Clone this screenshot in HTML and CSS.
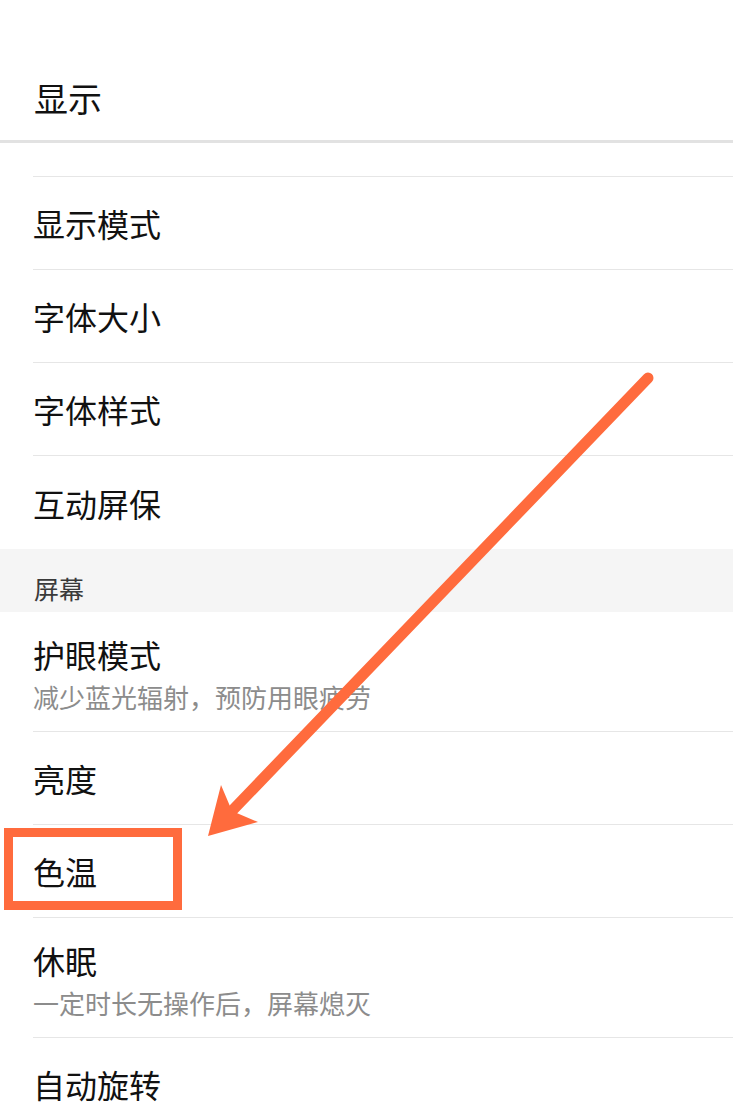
FILE: index.html
```html
<!DOCTYPE html>
<html lang="zh-CN">
<head>
<meta charset="utf-8">
<title>显示</title>
<link rel="stylesheet" href="styles.css">
</head>
<body>
<div class="page">
  <header class="header">
    <h1 class="header-title">显示</h1>
  </header>
  <div class="list">
    <div class="row row-partial"><span class="title">壁纸</span></div>
    <div class="row"><span class="title">显示模式</span></div>
    <div class="row"><span class="title">字体大小</span></div>
    <div class="row"><span class="title">字体样式</span></div>
    <div class="row row-last"><span class="title">互动屏保</span></div>
    <div class="section">屏幕</div>
    <div class="row row-tall">
      <span class="title">护眼模式</span>
      <span class="subtitle">减少蓝光辐射，预防用眼疲劳</span>
    </div>
    <div class="row"><span class="title">亮度</span></div>
    <div class="row"><span class="title">色温</span></div>
    <div class="row row-tall">
      <span class="title">休眠</span>
      <span class="subtitle">一定时长无操作后，屏幕熄灭</span>
    </div>
    <div class="row"><span class="title">自动旋转</span></div>
  </div>
  <svg class="annotation" width="733" height="1108" viewBox="0 0 733 1108" xmlns="http://www.w3.org/2000/svg">
    <line x1="648" y1="378" x2="228" y2="815" stroke="#ff6b3d" stroke-width="11" stroke-linecap="round"/>
    <polygon points="208,836 221,785 232,811 258,822" fill="#ff6b3d"/>
    <rect x="8.5" y="832.5" width="169" height="73" fill="none" stroke="#ff6b3d" stroke-width="9"/>
  </svg>
</div>
</body>
</html>
```

FILE: styles.css
```css
* {
  box-sizing: border-box;
}

html, body {
  margin: 0;
  padding: 0;
  background: #ffffff;
}

body {
  font-family: "Noto Sans CJK SC", "Noto Sans", sans-serif;
  color: #111111;
}

.page {
  position: relative;
  width: 733px;
  height: 1108px;
  overflow: hidden;
}

.header {
  height: 143px;
  padding: 74px 0 0 34px;
  border-bottom: 3px solid #e2e2e2;
  background: #ffffff;
  position: relative;
  z-index: 1;
}

.header-title {
  margin: 0;
  font-size: 34px;
  line-height: 48px;
  font-weight: 400;
  color: #111111;
}

.list {
  overflow: hidden;
  height: 965px;
}

.row {
  height: 93px;
  margin-left: 33px;
  border-bottom: 1px solid #e6e6e6;
  display: flex;
  flex-direction: column;
  justify-content: center;
}

.row-partial {
  margin-top: -59px;
  padding-bottom: 12px;
}

.row-last {
  border-bottom: none;
}

.row-tall {
  height: 120px;
  justify-content: flex-start;
  padding-top: 20px;
}

.title {
  font-size: 32px;
  line-height: 44px;
  color: #111111;
}

.subtitle {
  margin-top: 4px;
  font-size: 26px;
  line-height: 34px;
  color: #8c8c8c;
}

.section {
  height: 63px;
  background: #f5f5f5;
  padding: 24px 0 0 34px;
  font-size: 25px;
  line-height: 30px;
  color: #3a3a3a;
}

.annotation {
  position: absolute;
  left: 0;
  top: 0;
  z-index: 2;
  pointer-events: none;
}
```
